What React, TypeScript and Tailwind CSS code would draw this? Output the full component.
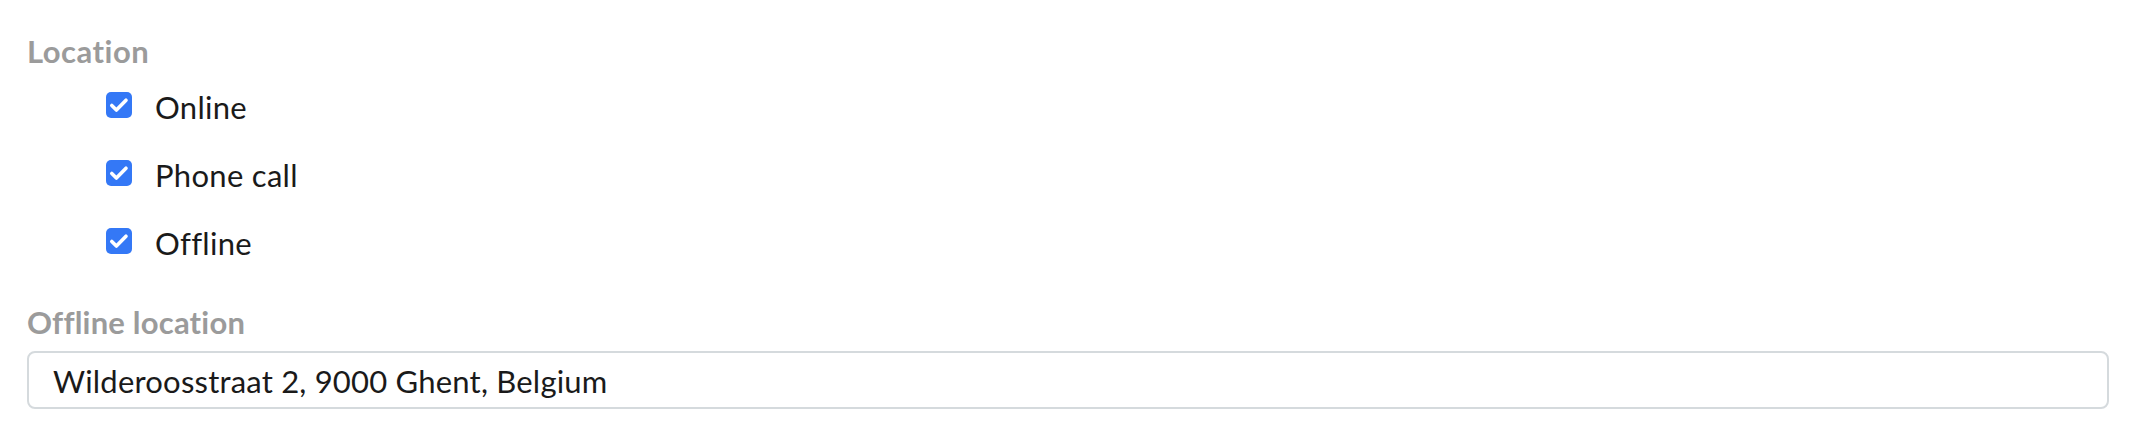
import React from "react";

const options = ["Online", "Phone call", "Offline"];

const Checkbox = () => (
  <div className="mt-[3px] flex h-[26px] w-[26px] shrink-0 items-center justify-center rounded-[5px] bg-[#3478f6]">
    <svg width="26" height="26" viewBox="0 0 26 26" fill="none">
      <path
        d="M5.8 13.4L10.4 18L20 8.2"
        stroke="white"
        strokeWidth="3.6"
        strokeLinecap="round"
        strokeLinejoin="round"
      />
    </svg>
  </div>
);

const App = () => {
  return (
    <div className="min-h-[440px] w-full bg-white px-[27px] pt-[33px] font-['Lato',sans-serif] text-[31px] leading-[36px] tracking-[0.3px] text-[#1a1a1a] [font-variant-ligatures:none]">
      <p className="font-bold tracking-[0.5px] text-[#9b9b9b]">Location</p>

      <div className="ml-[79px] mt-[20px] flex flex-col gap-[32px]">
        {options.map((opt) => (
          <label key={opt} className="flex items-start gap-[23px]">
            <Checkbox />
            <span>{opt}</span>
          </label>
        ))}
      </div>

      <p className="mt-[43px] font-bold tracking-[0.2px] text-[#9b9b9b]">Offline location</p>
      <input
        readOnly
        value="Wilderoosstraat 2, 9000 Ghent, Belgium"
        className="mt-[11px] box-border h-[58px] w-full rounded-[8px] border-2 border-[#d5dadd] bg-white pl-[24px] pt-[10px] pb-[8px] leading-[36px] tracking-[0.2px] text-[#1a1a1a] outline-none [font-variant-ligatures:none]"
      />
    </div>
  );
};

export default App;
